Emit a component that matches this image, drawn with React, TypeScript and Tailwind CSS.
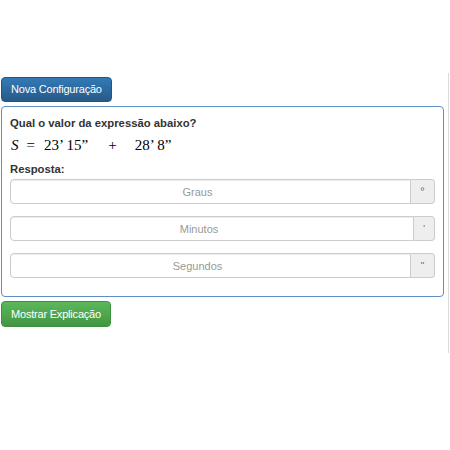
import React from "react";

const campos = [
  { nome: "Graus", simbolo: "º", addonW: "w-[24px]" },
  { nome: "Minutos", simbolo: "'", addonW: "w-[21px]" },
  { nome: "Segundos", simbolo: "''", addonW: "w-[24px]" },
];

const App: React.FC = () => {
  return (
    <div className="relative w-[450px] h-[450px] bg-white font-['Liberation_Sans',Arial,sans-serif] text-[#333]">
      {/* barra de rolagem da coluna */}
      <div className="absolute left-[448px] top-[73px] w-px h-[280px] bg-[#dcdcdc]" />

      <div className="flex flex-col items-start pt-[77px] pl-px w-[443px]">
        <button className="h-[25px] px-[9px] text-[11px] tracking-[-0.2px] text-white rounded-[4px] border border-[#245580] bg-gradient-to-b from-[#337ab7] to-[#265a88]">
          Nova Configuração
        </button>

        <div className="mt-[4px] w-[443px] rounded-[4px] border border-[#5d8ec6] px-[8px] pt-[7px] pb-[18px]">
          <p className="text-[11.3px] font-bold leading-[18px]">
            Qual o valor da expressão abaixo?
          </p>
          <div className="flex items-center h-[24px] mt-[1px] pl-[1px] font-['Liberation_Serif','Times_New_Roman',serif] text-[15px] text-black">
            <span className="italic">S</span>
            <span className="ml-[8px]">=</span>
            <span className="ml-[9px]">23’ 15”</span>
            <span className="ml-[20px]">+</span>
            <span className="ml-[18px]">28’ 8”</span>
          </div>
          <p className="text-[11.3px] font-bold leading-[18px] mt-[3px]">Resposta:</p>

          <div className="flex flex-col gap-[12px] mt-[1px]">
            {campos.map((c) => (
              <div key={c.nome} className="flex h-[25px]">
                <input
                  placeholder={c.nome}
                  className="flex-1 min-w-0 h-full pr-[26px] border border-[#ccc] rounded-l-[4px] text-center text-[11px] text-[#555] placeholder:text-[#999] shadow-[inset_0_1px_1px_rgba(0,0,0,0.075)] outline-none"
                />
                <span
                  className={`${c.addonW} h-full flex items-center justify-center border border-l-0 border-[#ccc] rounded-r-[4px] bg-[#eee] text-[9px] text-[#555]`}
                >
                  {c.simbolo}
                </span>
              </div>
            ))}
          </div>
        </div>

        <button className="mt-[4px] h-[26px] px-[9px] text-[11px] tracking-[-0.2px] text-white rounded-[4px] border border-[#3e8f3e] bg-gradient-to-b from-[#5cb85c] to-[#419641]">
          Mostrar Explicação
        </button>
      </div>
    </div>
  );
};

export default App;
